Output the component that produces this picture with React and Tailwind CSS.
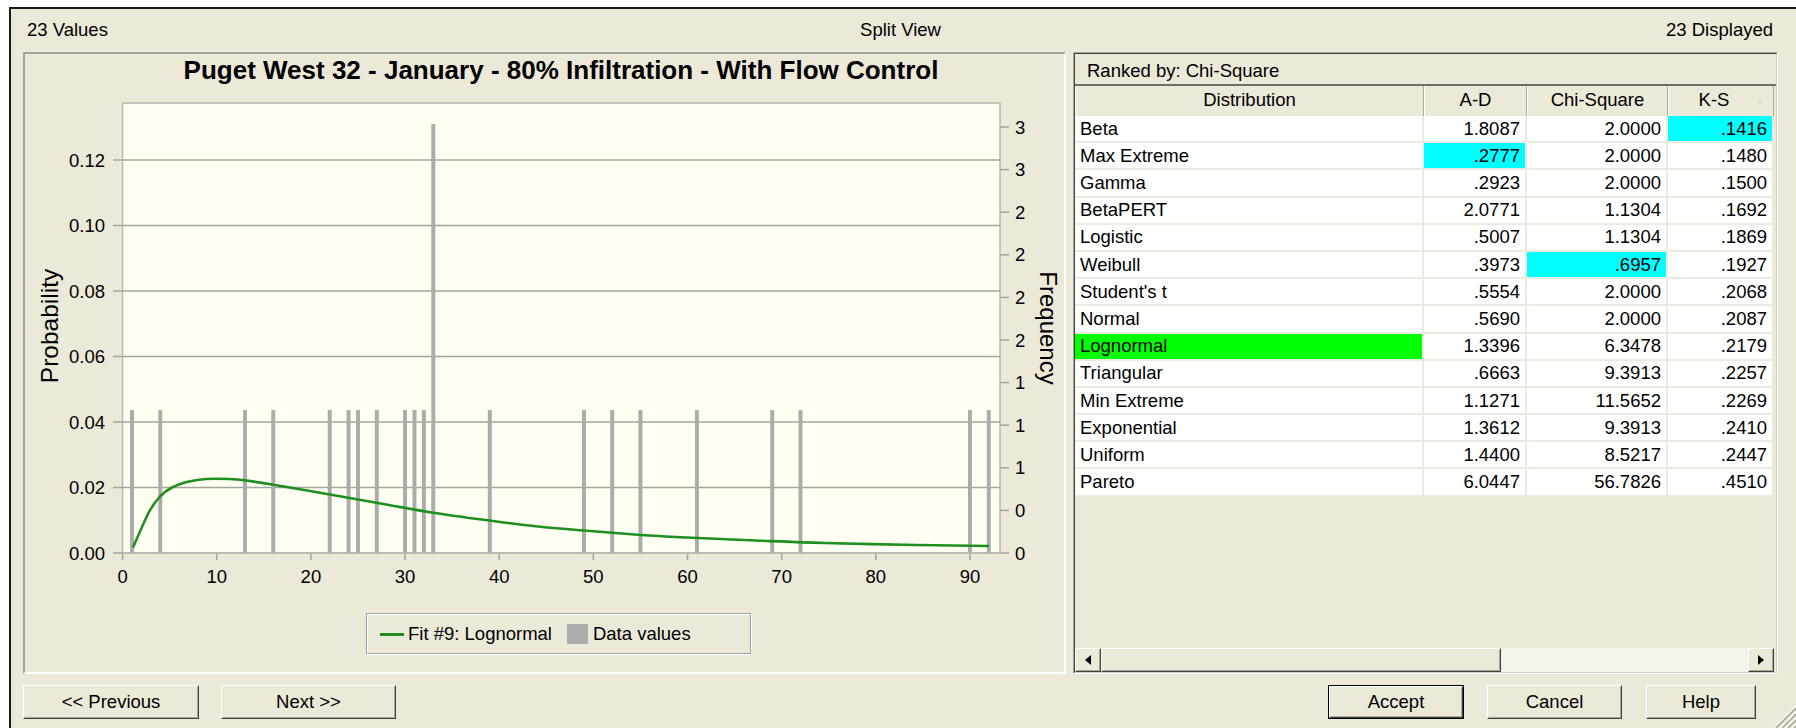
import React from 'react';

// 23 observations behind the histogram
const VALUES = [1, 4, 13, 16, 22, 24, 25, 27, 30, 31, 32, 33, 33, 33, 39, 49, 52, 55, 61, 69, 72, 90, 92];

// plot scales (svg user units = page pixels)
const X0 = 122.6;
const X1 = 1000;
const Y0 = 553;
const YTOP = 103;
const px = (v) => X0 + v * 9.415;
const py = (p) => Y0 - p * 3275;
const fy = (n) => Y0 - n * 143;

// fitted lognormal, sampled along the plot
const FIT = [
  [133, 547.5], [149, 512], [160, 496.5], [172, 487.5], [189, 481.5], [206, 479], [229, 479],
  [246, 480.5], [275, 485], [307, 490.5], [344, 497], [389, 505], [435, 513], [493, 521],
  [538, 526.5], [584, 530.5], [641, 535], [687, 537.5], [756, 540.5], [825, 543], [916, 545], [989, 546],
];

const RESULTS = [
  { name: 'Beta', ad: '1.8087', chi: '2.0000', ks: '.1416', hl: 3 },
  { name: 'Max Extreme', ad: '.2777', chi: '2.0000', ks: '.1480', hl: 1 },
  { name: 'Gamma', ad: '.2923', chi: '2.0000', ks: '.1500' },
  { name: 'BetaPERT', ad: '2.0771', chi: '1.1304', ks: '.1692' },
  { name: 'Logistic', ad: '.5007', chi: '1.1304', ks: '.1869' },
  { name: 'Weibull', ad: '.3973', chi: '.6957', ks: '.1927', hl: 2 },
  { name: "Student's t", ad: '.5554', chi: '2.0000', ks: '.2068' },
  { name: 'Normal', ad: '.5690', chi: '2.0000', ks: '.2087' },
  { name: 'Lognormal', ad: '1.3396', chi: '6.3478', ks: '.2179', hl: 0 },
  { name: 'Triangular', ad: '.6663', chi: '9.3913', ks: '.2257' },
  { name: 'Min Extreme', ad: '1.1271', chi: '11.5652', ks: '.2269' },
  { name: 'Exponential', ad: '1.3612', chi: '9.3913', ks: '.2410' },
  { name: 'Uniform', ad: '1.4400', chi: '8.5217', ks: '.2447' },
  { name: 'Pareto', ad: '6.0447', chi: '56.7826', ks: '.4510' },
];

const COLS = ['w-[349px]', 'w-[103px]', 'w-[141px]', 'w-[106px]'];
const HEADS = ['Distribution', 'A-D', 'Chi-Square', 'K-S'];

function smoothPath(pts) {
  const f = (n) => n.toFixed(1);
  let d = `M${f(pts[0][0])},${f(pts[0][1])}`;
  for (let i = 0; i < pts.length - 1; i++) {
    const p0 = pts[i - 1] || pts[i];
    const p1 = pts[i];
    const p2 = pts[i + 1];
    const p3 = pts[i + 2] || p2;
    const c1x = p1[0] + (p2[0] - p0[0]) / 6;
    const c1y = p1[1] + (p2[1] - p0[1]) / 6;
    const c2x = p2[0] - (p3[0] - p1[0]) / 6;
    const c2y = p2[1] - (p3[1] - p1[1]) / 6;
    d += ` C${f(c1x)},${f(c1y)} ${f(c2x)},${f(c2y)} ${f(p2[0])},${f(p2[1])}`;
  }
  return d;
}

function Chart() {
  const counts = {};
  VALUES.forEach((v) => { counts[v] = (counts[v] || 0) + 1; });
  const grid = [0.02, 0.04, 0.06, 0.08, 0.1, 0.12];
  const left = [0, 0.02, 0.04, 0.06, 0.08, 0.1, 0.12];
  const freq = ['0', '0', '1', '1', '1', '2', '2', '2', '2', '3', '3'];
  const xs = [0, 10, 20, 30, 40, 50, 60, 70, 80, 90];
  const font = 'Liberation Sans, Arial, sans-serif';

  return (
    <svg width="1039" height="514" viewBox="25 86 1039 514" fontFamily={font} fontSize="18.5">
      <rect x={X0} y={YTOP} width={X1 - X0} height={Y0 - YTOP} fill="#fffff2" stroke="#b8b8b0" strokeWidth="1.5" />
      {grid.map((p) => (
        <line key={p} x1={X0} x2={X1} y1={py(p)} y2={py(p)} stroke="#a4a4a0" strokeWidth="1.5" />
      ))}
      {left.map((p) => (
        <g key={p}>
          <line x1="113" x2={X0} y1={py(p)} y2={py(p)} stroke="#a4a4a0" strokeWidth="1.5" />
          <text x="105" y={py(p) + 6.6} textAnchor="end">{p.toFixed(2)}</text>
        </g>
      ))}
      {freq.map((t, k) => (
        <g key={k}>
          <line x1={X1} x2="1009" y1={Y0 - k * 42.6} y2={Y0 - k * 42.6} stroke="#a4a4a0" strokeWidth="1.5" />
          <text x="1015" y={Y0 - k * 42.6 + 6.6}>{t}</text>
        </g>
      ))}
      {xs.map((v) => (
        <g key={v}>
          <line x1={px(v)} x2={px(v)} y1={Y0} y2="560" stroke="#a4a4a0" strokeWidth="1.5" />
          <text x={px(v)} y="583" textAnchor="middle">{v}</text>
        </g>
      ))}
      {Object.entries(counts).map(([v, n]) => (
        <rect key={v} x={px(Number(v)) - 2} y={fy(n)} width="4" height={Y0 - fy(n)} fill="#acacac" />
      ))}
      <line x1={X0} x2={X1} y1={Y0} y2={Y0} stroke="#b8b8b0" strokeWidth="1.5" />
      <path d={smoothPath(FIT)} fill="none" stroke="#1f8f1f" strokeWidth="2.6" />
      <text x="58" y="326" fontSize="24.5" textAnchor="middle" transform="rotate(-90 58 326)">Probability</text>
      <text x="1040" y="328" fontSize="24" textAnchor="middle" transform="rotate(90 1040 328)">Frequency</text>
    </svg>
  );
}

function Button({ label, width, primary }) {
  return (
    <div className={`${width} h-[34px] flex ${primary ? 'border border-black' : ''}`}>
      <div className="flex-1 flex border border-t-white border-l-white border-r-[#404040] border-b-[#404040]">
        <div className="flex-1 flex items-center justify-center border border-transparent border-r-[#aca899] border-b-[#aca899]">
          {label}
        </div>
      </div>
    </div>
  );
}

function Arrow({ dir }) {
  return (
    <div className="w-[26px] h-full flex border border-t-white border-l-white border-r-[#404040] border-b-[#404040] bg-[#ece9d8]">
      <div className="flex-1 flex items-center justify-center border border-transparent border-r-[#aca899] border-b-[#aca899]">
        <svg width="6" height="10" viewBox="0 0 6 10">
          {dir === 'left' ? <path d="M6 0 L0 5 L6 10 Z" fill="#000" /> : <path d="M0 0 L6 5 L0 10 Z" fill="#000" />}
        </svg>
      </div>
    </div>
  );
}

function ResultsTable() {
  return (
    <div className="w-[705px] h-[622px] flex border border-t-[#aca899] border-l-[#aca899] border-r-white border-b-white">
      <div className="flex-1 flex flex-col border border-t-[#404040] border-l-[#404040] border-r-[#d4d0c8] border-b-[#d4d0c8]">
        <div className="h-[32px] shrink-0 flex items-center pl-[12px] pt-[3px] border-b-2 border-[#6e6d66]">Ranked by: Chi-Square</div>
        <div className="flex h-[30px] shrink-0">
          {HEADS.map((h, i) => (
            <div
              key={h}
              className={`${COLS[i]} ${i === 3 ? 'pr-[14px]' : ''} relative flex items-center justify-center pb-[2px] border-l border-white border-r border-r-[#aca899]`}
            >
              {h}
              {i === 3 && <span className="absolute right-[12px] top-[15px] w-[2px] h-[3px] bg-[#d8d6cc]" />}
            </div>
          ))}
        </div>
        {RESULTS.map((r) => (
          <div key={r.name} className="flex h-[27.2px] shrink-0">
            {[r.name, r.ad, r.chi, r.ks].map((t, i) => {
              let bg = 'bg-white';
              if (r.hl === i) bg = i === 0 ? 'bg-[#00ff00]' : 'bg-[#00ffff]';
              return (
                <div
                  key={i}
                  className={`${COLS[i]} ${bg} ${i === 0 ? 'justify-start' : 'justify-end'} flex items-center px-[5px] border-r-2 border-b-2 border-[#ecebe2]`}
                >
                  {t}
                </div>
              );
            })}
          </div>
        ))}
        <div className="flex-1" />
        <div className="h-[24px] shrink-0 flex mr-[2px]">
          <Arrow dir="left" />
          <div className="w-[400px] h-full border border-t-white border-l-white border-r-[#404040] border-b-[#404040] bg-[#ece9d8]">
            <div className="h-full border border-transparent border-r-[#aca899] border-b-[#aca899]" />
          </div>
          <div className="flex-1 h-full bg-[repeating-conic-gradient(#ffffff_0_25%,#ece9d8_0_50%)] bg-[length:2px_2px]" />
          <Arrow dir="right" />
        </div>
      </div>
    </div>
  );
}

export default function App() {
  return (
    <div className="relative w-[1796px] h-[728px] overflow-hidden bg-white pt-[7px] pl-[9px] font-['Liberation_Sans',Arial,sans-serif] text-[18.5px] text-black">
      <div className="h-full bg-[#ece9d8] border-t-2 border-l-2 border-[#1a1a1a] pl-[12px]">
        <div className="w-[1755px]">
          <div className="grid grid-cols-3 h-[43px] pt-[7px]">
            <div className="pl-[4px]">23 Values</div>
            <div className="text-center">Split View</div>
            <div className="text-right pr-[5px]">23 Displayed</div>
          </div>

          <div className="flex gap-[7px]">
            <div className="w-[1043px] h-[622px] flex flex-col border-2 border-t-[#a4a29a] border-l-[#a4a29a] border-r-white border-b-white">
              <div className="h-[32px] shrink-0 flex items-center justify-center pl-[33px] text-[26px] font-bold">
                Puget West 32 - January - 80% Infiltration - With Flow Control
              </div>
              <Chart />
              <div className="mt-[13px] ml-[341px] w-[386px] h-[42px] flex border border-t-[#a0a0a0] border-l-[#a0a0a0] border-r-white border-b-white">
                <div className="flex-1 flex items-center pl-[12px] border border-t-white border-l-white border-r-[#a0a0a0] border-b-[#a0a0a0]">
                  <div className="w-[24px] h-[3px] bg-[#1f8f1f] mr-[4px]" />
                  <span>Fit #9: Lognormal</span>
                  <div className="w-[21px] h-[20px] bg-[#acacac] ml-[15px] mr-[5px]" />
                  <span>Data values</span>
                </div>
              </div>
            </div>
            <ResultsTable />
          </div>

          <div className="flex items-center mt-[11px]">
            <Button label="<< Previous" width="w-[176px]" />
            <div className="ml-[22px]">
              <Button label="Next >>" width="w-[175px]" />
            </div>
            <div className="flex-1" />
            <Button label="Accept" width="w-[136px]" primary />
            <div className="ml-[23px]">
              <Button label="Cancel" width="w-[135px]" />
            </div>
            <div className="ml-[24px] mr-[22px]">
              <Button label="Help" width="w-[110px]" />
            </div>
          </div>
        </div>
      </div>

      <svg className="absolute right-0 bottom-0" width="24" height="24" viewBox="0 0 24 24">
        {[0, 6, 12, 18].map((o) => (
          <g key={o}>
            <line x1={o + 2} y1="24" x2="24" y2={o + 2} stroke="#ffffff" strokeWidth="1.2" />
            <line x1={o + 4} y1="24" x2="24" y2={o + 4} stroke="#aca899" strokeWidth="1.6" />
          </g>
        ))}
      </svg>
    </div>
  );
}
